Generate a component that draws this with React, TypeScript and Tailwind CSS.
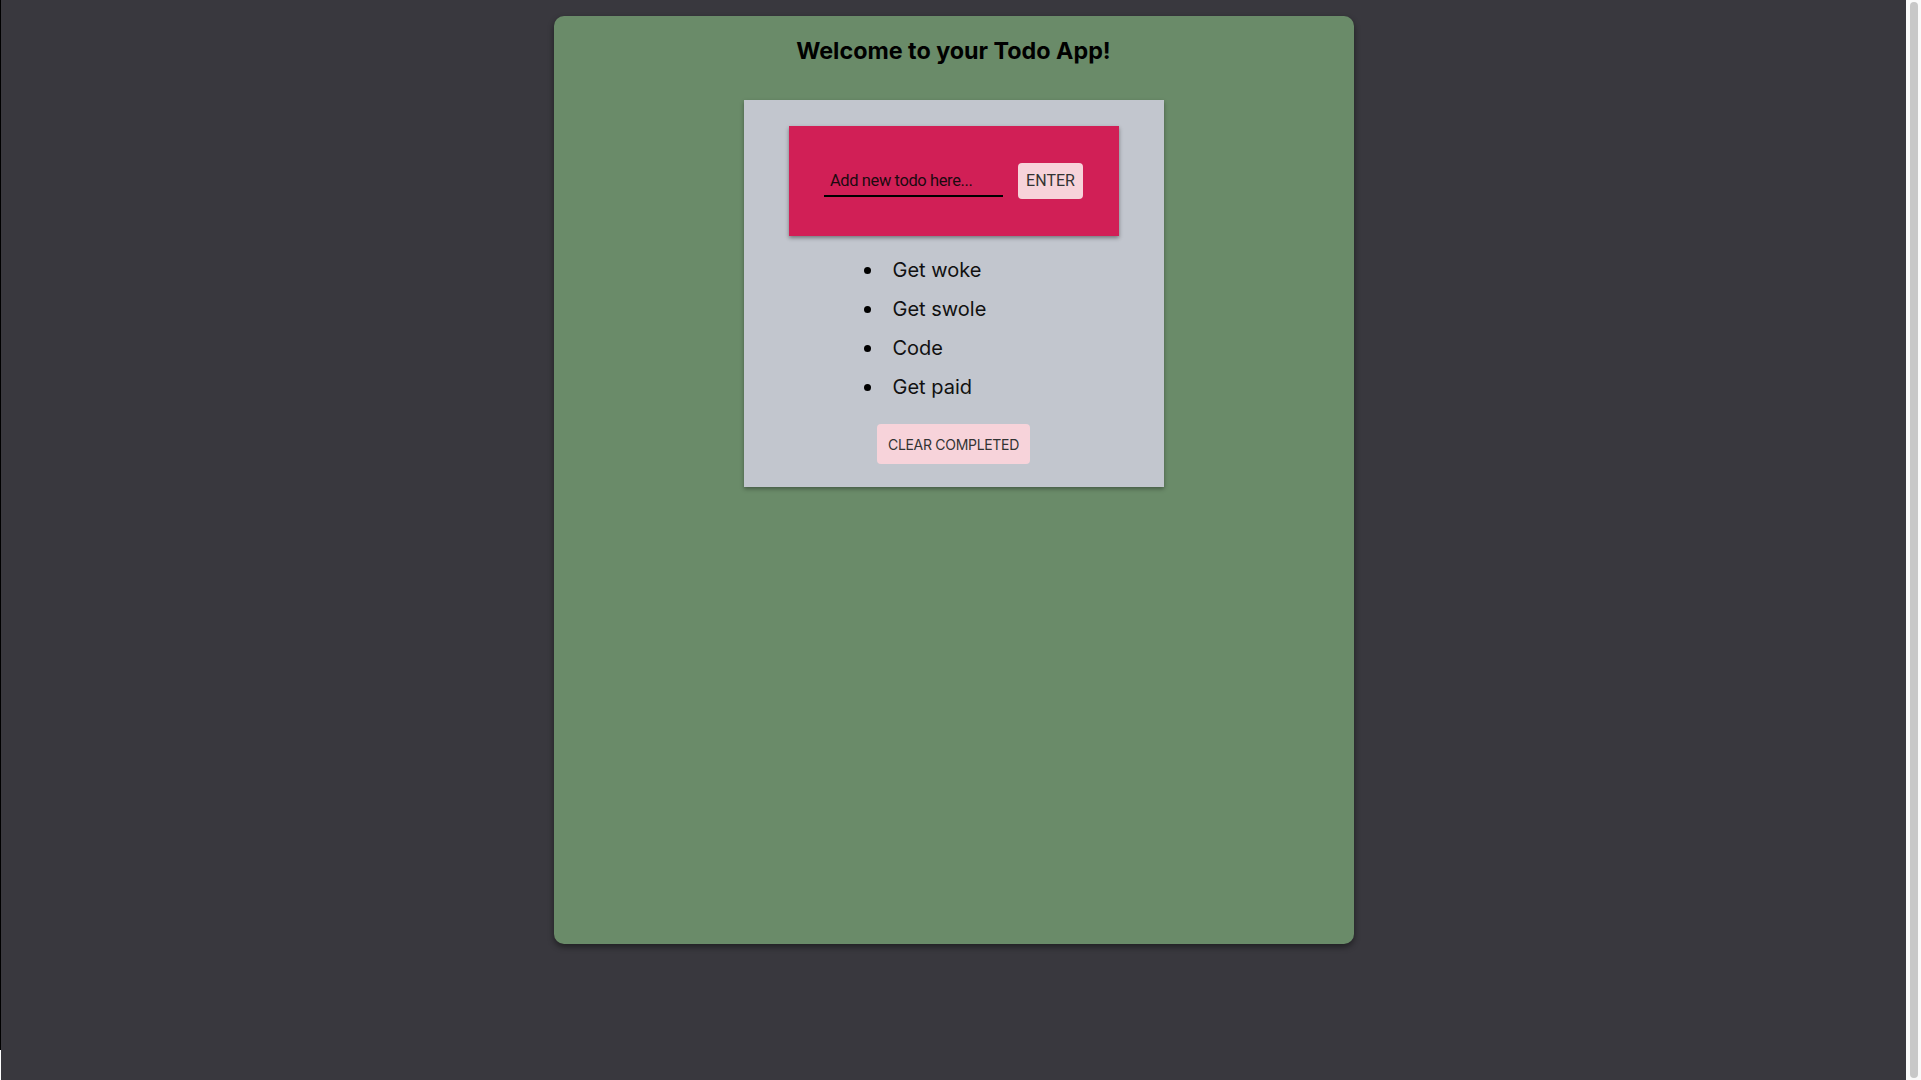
import React from "react";

const todos = ["Get woke", "Get swole", "Code", "Get paid"];

export default function App() {
  return (
    <div className="flex h-[1080px] w-full overflow-hidden bg-[#39383e]">
      <div className="flex w-px flex-col">
        <div className="flex-1 bg-black" />
        <div className="h-[30px] bg-white" />
      </div>
      <div className="flex-1 bg-[#39383e] pt-[16px]">
        <div
          className="mx-auto flex h-[928px] w-[800px] flex-col items-center rounded-[10px] bg-[#6a8b69] shadow-[0_3px_6px_rgba(0,0,0,0.45)]"
          style={{ fontFamily: "Inter, 'Noto Sans', sans-serif" }}
        >
          <h1 className="mt-[21px] text-[23.3px] font-bold leading-[28px] text-black">
            Welcome to your Todo App!
          </h1>
          <div className="mt-[35px] flex w-[420px] flex-col items-center bg-[#c2c6ce] pb-[23px] pt-[26px] shadow-[0_2px_4px_rgba(0,0,0,0.35)]">
            <div className="flex h-[110px] w-[330px] items-center justify-center gap-[15px] bg-[#d11f56] shadow-[0_2px_4px_rgba(0,0,0,0.4)]">
              <div
                className="flex h-[32px] w-[179px] items-center border-b-2 border-black pl-[6px] pt-[2px] text-[16.5px] tracking-[-0.4px] text-[#1b0a10]"
                style={{ fontFamily: "Roboto, 'Liberation Sans', sans-serif" }}
              >
                Add new todo here...
              </div>
              <button
                className="flex h-[36px] w-[65px] items-center justify-center rounded-[4px] bg-[#f7d3da] text-[16px] text-[#333]"
                style={{ fontFamily: "Roboto, 'Liberation Sans', sans-serif" }}
              >
                ENTER
              </button>
            </div>
            <ul className="mt-[15px] w-full pl-[120px] text-[20px] text-[#111]">
              {todos.map((t) => (
                <li key={t} className="flex h-[39px] items-center leading-[39px]">
                  <span className="h-[7px] w-[7px] rounded-full bg-black" />
                  <span className="ml-[22px]">{t}</span>
                </li>
              ))}
            </ul>
            <button className="mt-[17px] flex h-[40px] w-[153px] items-center justify-center rounded-[4px] bg-[#f7d3da] text-[14px] tracking-[-0.3px] text-[#333]">
              CLEAR COMPLETED
            </button>
          </div>
        </div>
      </div>
      <div className="flex w-[15px] justify-center bg-[#fafafa] py-[2px]">
        <div className="h-full w-[8px] rounded-full bg-[#c8c8c8]" />
      </div>
    </div>
  );
}
